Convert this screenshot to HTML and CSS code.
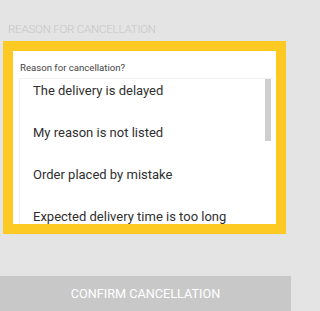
FILE: index.html
```html
<!DOCTYPE html>
<html>
<head>
<meta charset="utf-8">
<link rel="stylesheet" href="styles.css">
</head>
<body>
<div class="screen">
  <div class="title">REASON FOR CANCELLATION</div>
  <div class="card">
    <div class="label">Reason for cancellation?</div>
    <div class="list">
      <div class="item">The delivery is delayed</div>
      <div class="item">My reason is not listed</div>
      <div class="item">Order placed by mistake</div>
      <div class="item">Expected delivery time is too long</div>
      <div class="scrollbar"></div>
    </div>
  </div>
  <div class="spacer"></div>
  <div class="button">CONFIRM CANCELLATION</div>
</div>
</body>
</html>
```
FILE: styles.css
```css
html, body {
  margin: 0;
  padding: 0;
}
body {
  background: #e4e4e4;
  font-family: Roboto, "Liberation Sans", sans-serif;
}
.screen {
  width: 291px;
  height: 311px;
  display: flex;
  flex-direction: column;
  overflow: hidden;
}
.title {
  height: 41px;
  box-sizing: border-box;
  padding: 21px 0 0 8px;
  font-size: 11.5px;
  font-weight: 300;
  color: #c6c6c6;
  line-height: 16px;
  letter-spacing: -0.2px;
}
.card {
  margin: 0 5px 0 3px;
  height: 193px;
  box-sizing: border-box;
  border: 10px solid #fcca22;
  background: #fff;
  display: flex;
  flex-direction: column;
  padding: 10px 3px 0 6px;
}
.label {
  font-size: 9.6px;
  color: #444;
  line-height: 13px;
  padding-left: 1px;
  height: 17px;
}
.list {
  position: relative;
  flex: 1;
  overflow: hidden;
  border-left: 1px solid #f0f0f0;
  border-top: 1px solid #f2f2f2;
  padding: 0 0 0 13px;
}
.item {
  font-size: 13px;
  color: #2f2f2f;
  line-height: 23px;
  height: 42px;
}
.scrollbar {
  position: absolute;
  top: 0;
  right: 2px;
  width: 6px;
  height: 62px;
  background: #cfcfcf;
}
.spacer {
  height: 42px;
}
.button {
  height: 35px;
  background: #c8c8c8;
  color: #fff;
  font-size: 12.7px;
  text-align: center;
  line-height: 35px;
}
```
